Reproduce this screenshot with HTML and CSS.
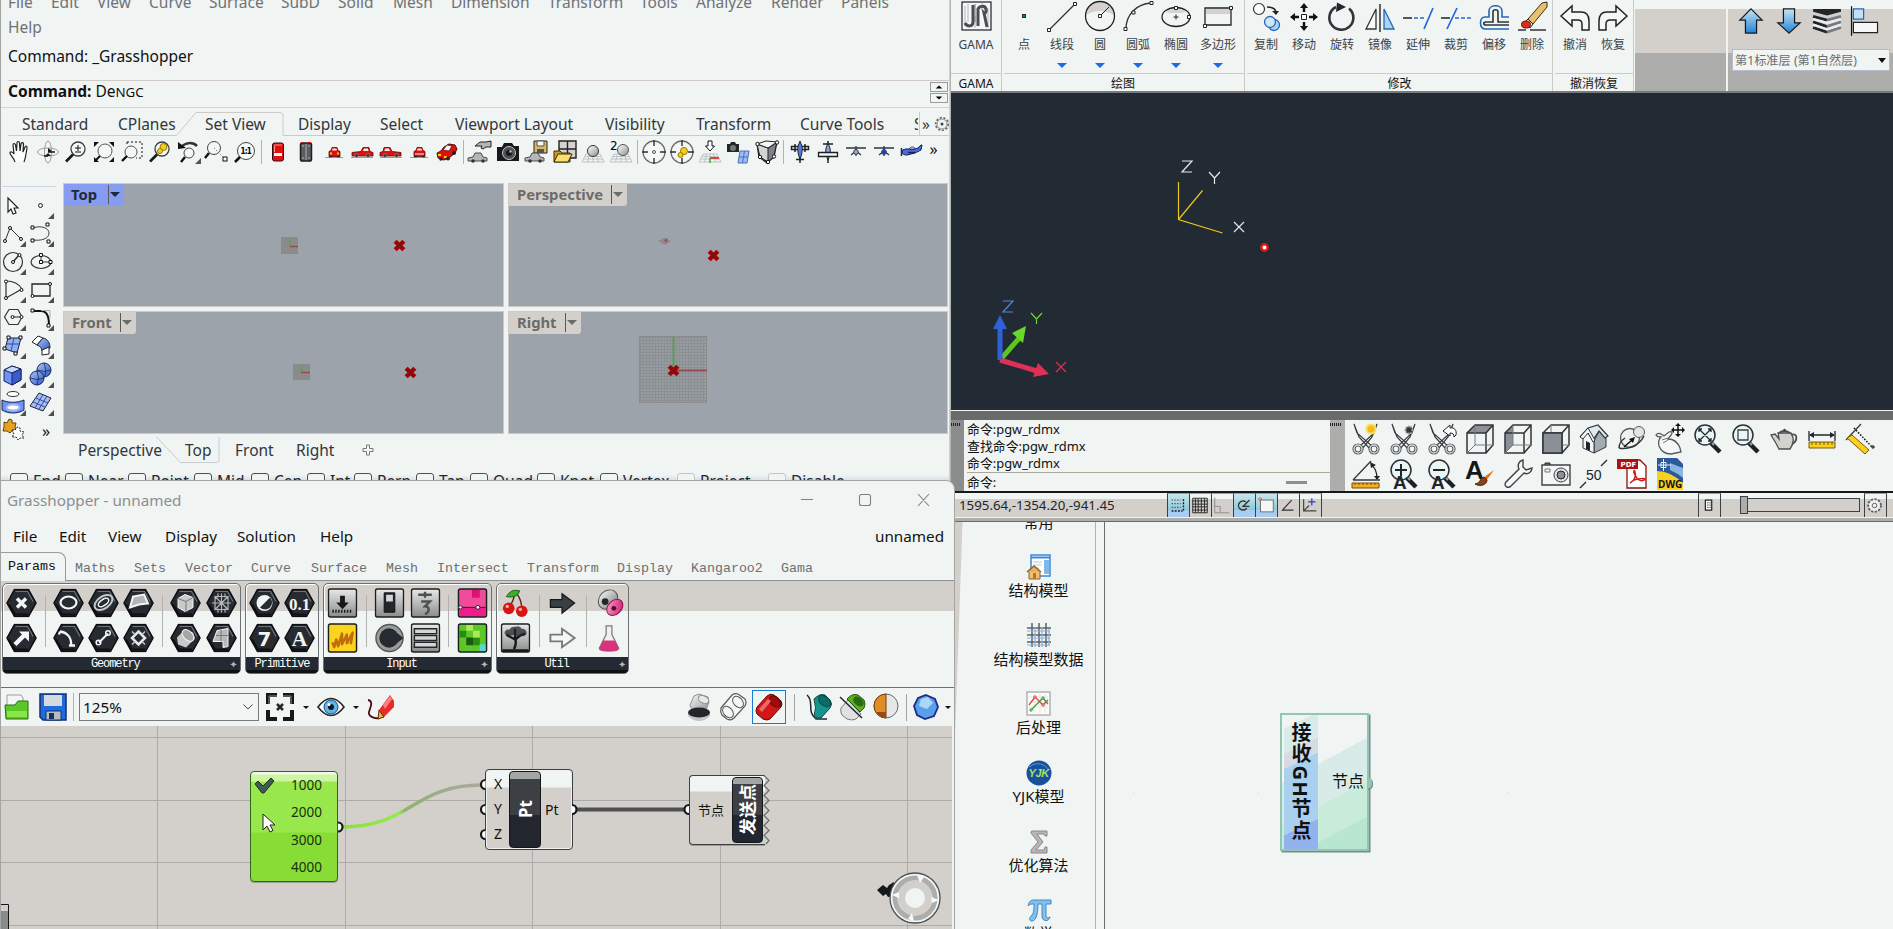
FILE: index.html
```html
<!DOCTYPE html>
<html lang="zh-CN">
<head>
<meta charset="utf-8">
<title>Grasshopper - unnamed</title>
<link rel="stylesheet" href="styles.css">
</head>
<body>
<svg class="defs" aria-hidden="true">
  <defs>
    <linearGradient id="gSphere" x1="0" y1="0" x2="1" y2="1"><stop offset="0" stop-color="#fff"/><stop offset="1" stop-color="#8d9194"/></linearGradient>
    <linearGradient id="gBlue" x1="0" y1="0" x2="1" y2="1"><stop offset="0" stop-color="#a9c8f5"/><stop offset="1" stop-color="#2f55c8"/></linearGradient>
    <linearGradient id="gArrow" x1="0" y1="0" x2="0" y2="1"><stop offset="0" stop-color="#c8e4f4"/><stop offset="1" stop-color="#1f84d6"/></linearGradient>
    <linearGradient id="gGrey" x1="0" y1="0" x2="0" y2="1"><stop offset="0" stop-color="#e8e8e6"/><stop offset="1" stop-color="#8a8c8c"/></linearGradient>
    <linearGradient id="gPink" x1="0" y1="0" x2="1" y2="1"><stop offset="0" stop-color="#f7a8c8"/><stop offset="1" stop-color="#d0106c"/></linearGradient>
  </defs>
  <symbol id="lens" viewBox="0 0 24 24"><circle cx="14" cy="9" r="7" fill="#f4f7f6" stroke="#3a3f44" stroke-width="1.300"/><path d="M9 14.500L2 21.500" stroke="#16191c" stroke-width="2.600"/></symbol>
  <symbol id="carSide" viewBox="0 0 24 24"><path d="M1 17.500h22" stroke="#9a9a98"/><path d="M2 12.500l9-1 2-4h6l1 4 3 1v3.500H2z" fill="#e01010" stroke="#5a0808" stroke-width=".8"/><path d="M13 11l1-2.500h4l.5 2.500z" fill="#e8eceb"/><circle cx="6.500" cy="15.500" r="1.800" fill="#333" stroke="#999" stroke-width=".6"/><circle cx="18" cy="15.500" r="1.800" fill="#333" stroke="#999" stroke-width=".6"/></symbol>
  <symbol id="carFront" viewBox="0 0 24 24"><path d="M3 17.500h18" stroke="#9a9a98"/><path d="M7 16.500v-5l2-1 1-3h5l1 3 2 1v5z" fill="#e01010" stroke="#5a0808" stroke-width=".8"/><path d="M10 10.500l.5-2h4l.5 2z" fill="#f4dede"/><path d="M7 16.500h3M15 16.500h3" stroke="#222" stroke-width="1.500"/></symbol>
  <symbol id="carGrey" viewBox="0 0 24 24"><path d="M2 18l5-1 2-4h6l2 4 4 1v3H2z" fill="#b5b7b6" stroke="#4a4c4c"/><circle cx="7" cy="21" r="1.800" fill="#333"/><circle cx="17" cy="21" r="1.800" fill="#333"/></symbol>
  <symbol id="floorGrid" viewBox="0 0 24 24"><path d="M5 14h14l4 8H1zM8.500 14l-2 8M12 14v8M15.500 14l2 8M4 16.500h16M2.500 19h19" fill="none" stroke="#b4b7b7" stroke-width=".8"/></symbol>
  <symbol id="scope" viewBox="0 0 24 24"><circle cx="12" cy="12" r="11" fill="#f4f7f6" stroke="#6b6f72" stroke-width="1.300"/><path d="M12 0v6M12 18v6M0 12h6M18 12h6" stroke="#2b2f33" stroke-width="1.400"/></symbol>
  <symbol id="plane" viewBox="0 0 24 24"><path d="M12 1v22" stroke="#1c2024" stroke-width="1.500"/><path d="M3.500 6.500h17v3h-17zM7 4v8M17 4v8M8 19.500h8" fill="#f0f4f3" stroke="#1c2024" stroke-width="1.500"/><path d="M12 2c3 4 3 10 0 17-3-7-3-13 0-17z" fill="#5a7be0" stroke="#1c2024"/></symbol>
  <symbol id="jet" viewBox="0 0 24 24"><path d="M2 8h20M12 6v10M7 15l5-4 5 4" fill="none" stroke="#30353a" stroke-width="1.300"/><circle cx="12" cy="12" r="2.300" fill="#a4b4e0" stroke="#30353a"/></symbol>
  <symbol id="corner" viewBox="0 0 28 28"><path d="M20 27h6v-6z" fill="#4c5052"/></symbol>
  <symbol id="hex" viewBox="0 0 31 29"><path d="M8.500 1h14L30 14.500 22.500 28h-14L1 14.500z" fill="#262b32" stroke="#0c0e10" stroke-width="1.500"/><path d="M9.500 3h12L27 13" fill="none" stroke="#6d7378" stroke-width="1.200"/><path d="M3 16l6 10h13" fill="none" stroke="#0e1012" stroke-width="2"/></symbol>
  <symbol id="tile" viewBox="0 0 31 31"><rect x="1" y="1" width="29" height="29" rx="2" fill="url(#gGrey)" stroke="#1c1e20" stroke-width="1.500"/></symbol>
  <symbol id="scissors" viewBox="0 0 30 32"><path d="M3 1l3 9 15 13-2 3L8 14zM26 1l-3 9L9 23l2 3L21 14z" fill="#f4f6f5" stroke="#33373b" stroke-width="1.200"/><circle cx="7" cy="26" r="4" fill="none" stroke="#585c60" stroke-width="3.200"/><circle cx="23" cy="26" r="4" fill="none" stroke="#585c60" stroke-width="3.200"/><circle cx="7" cy="26" r="4" fill="none" stroke="#d6d8d7" stroke-width="1.300"/><circle cx="23" cy="26" r="4" fill="none" stroke="#d6d8d7" stroke-width="1.300"/></symbol>
  <symbol id="bigLens" viewBox="0 0 30 32"><path d="M18 20l9 9" stroke="#1d2125" stroke-width="4.500"/><path d="M18 19l3 3" stroke="#9fa2a3" stroke-width="2"/><circle cx="12" cy="12" r="10" fill="#eaf5f6" stroke="#2c3136" stroke-width="1.500"/></symbol>
  <symbol id="cubeWire" viewBox="0 0 30 32"><path d="M2 10h19v20H2zM2 10l8-8h18v20l-7 8M21 10l7-8" fill="none" stroke="#30353a" stroke-width="1.500"/><path d="M10 2v20h18M10 22l-8 8" fill="none" stroke="#777c80"/></symbol>
  <symbol id="cross" viewBox="0 0 12 12"><path d="M2 2l8 8M10 2l-8 8" stroke="#970606" stroke-width="4"/></symbol>
</svg>

<main class="desktop">

<!-- Rhino -->
<section class="win rhino">
  <nav class="rmenu"><span>File</span><span>Edit</span><span>View</span><span>Curve</span><span>Surface</span><span>SubD</span><span>Solid</span><span>Mesh</span><span>Dimension</span><span>Transform</span><span>Tools</span><span>Analyze</span><span>Render</span><span>Panels</span><span>Help</span></nav>
  <div class="history">Command: _Grasshopper</div>
  <div class="prompt"><span><b>Command:</b> De<small>NGC</small></span>
    <span class="spin"><svg viewBox="0 0 18 10"><path d="M5 7h8L9 3z"/></svg><svg viewBox="0 0 18 10"><path d="M5 3h8L9 7z"/></svg></span>
  </div>
  <nav class="rtabs"><span>Standard</span><span>CPlanes</span><span class="on">Set View</span><span>Display</span><span>Select</span><span>Viewport Layout</span><span>Visibility</span><span>Transform</span><span>Curve Tools</span><span class="cut">S</span><span class="more">»<svg viewBox="0 0 16 16"><circle cx="8" cy="8" r="6.300" fill="none" stroke="#6c7072" stroke-width="1.800" stroke-dasharray="2.200 1.600"/><circle cx="8" cy="8" r="5" fill="none" stroke="#8b8f90"/><circle cx="8" cy="8" r="1.500" fill="#444"/></svg></span>
    <svg class="tabline" viewBox="0 0 942 25"><path d="M0 23.500H168.500L188 .5h84q3 0 3 3v20H942" fill="none" stroke="#cfcac6"/></svg></nav>
  <div class="rtools">
    <svg viewBox="0 0 24 24"><path d="M7 22c-1-4-5-7-5-9s3-1 4 1L5 5c0-2 2-2 2.500 0l1 6L9 3c0-2 2.500-2 2.500 0l.5 8 1-7c.5-2 2.500-1.500 2.500 0l-.5 8 2-5c.5-1.500 2.500-1 2 1-1 5-1 9-3 14" fill="#fbfcfc" stroke="#1e2226" stroke-width="1.200"/></svg>
    <svg viewBox="0 0 24 24"><ellipse cx="12" cy="12" rx="10.500" ry="4" fill="none" stroke="#9a9d9e"/><ellipse cx="12" cy="12" rx="3.500" ry="11" fill="none" stroke="#9a9d9e"/><path d="M9 16h6l-3-3zM12 8l4 3-4 2z" fill="#15181b"/><path d="M8 16h4M13 12h6" stroke="#15181b" stroke-width="1.500"/></svg>
    <svg viewBox="0 0 24 24"><use href="#lens"/><path d="M11 8h6M14 5v6M11 12h6" stroke="#111"/></svg>
    <svg viewBox="0 0 24 24"><path d="M2 2h5L2 7zM22 2h-5l5 5zM2 22v-5l5 5zM22 22v-5l-5 5z" fill="#111"/><circle cx="13" cy="11" r="7" fill="#f4f7f6" stroke="#555"/><path d="M8 16l-5 5" stroke="#111" stroke-width="2"/></svg>
    <svg viewBox="0 0 24 24"><path d="M7 2h15v16h-6M7 2v4" fill="none" stroke="#111" stroke-dasharray="2 2"/><circle cx="11" cy="12" r="6" fill="#f4f7f6" stroke="#555"/><path d="M7 16l-5 5" stroke="#111" stroke-width="2.400"/></svg>
    <svg viewBox="0 0 24 24"><use href="#lens"/><circle cx="15.500" cy="7" r="3.500" fill="#f6ce1a" stroke="#9a7a08"/><circle cx="12" cy="11" r="2.500" fill="#f6ce1a" stroke="#9a7a08"/></svg>
    <svg viewBox="0 0 24 24"><path d="M4 7c5-5 12-5 16-1" fill="none" stroke="#333" stroke-width="2.500"/><path d="M1 9V2l8 6z" fill="#111"/><circle cx="12" cy="13" r="5" fill="#f4f7f6" stroke="#444"/><path d="M8 17l-4 5" stroke="#111" stroke-width="2.400"/><path d="M18 24h6v-6z" fill="#555"/></svg>
    <svg viewBox="0 0 24 24"><circle cx="9" cy="8" r="6.500" fill="#f4f7f6" stroke="#444"/><path d="M4 13l-4 5" stroke="#111" stroke-width="2.400"/><path d="M9 8l9 9" stroke="#555" stroke-dasharray="1 2"/><rect x="18" y="17" width="4" height="4" fill="#fff" stroke="#111"/></svg>
    <svg viewBox="0 0 24 24"><circle cx="13" cy="11" r="8.500" fill="#f8fafa" stroke="#444"/><path d="M7 17l-5 5" stroke="#111" stroke-width="2.600"/><text x="7.500" y="14" class="t8">1:1</text></svg>
    <i></i>
    <svg viewBox="0 0 24 24"><rect x="6.500" y="3" width="11" height="18" rx="2" fill="#e01010" stroke="#3a0808"/><path d="M8 13h8v3H8z" fill="#f4f7f6"/><path d="M8 5h8M8.500 6v6" stroke="#ff9080"/></svg>
    <svg viewBox="0 0 24 24"><rect x="6.500" y="3" width="11" height="18" rx="1.500" fill="#5a5e61" stroke="#1c1e20" stroke-width="1.500"/><path d="M12 4v16M8 6h2M14 6h2M8 18h2M14 18h2" stroke="#a9acac"/><path d="M7 2.500h3M14 2.500h3M7 21.500h3M14 21.500h3" stroke="#e01010"/></svg>
    <svg viewBox="0 0 24 24"><use href="#carFront"/><path d="M8 13.500h2M15 13.500h2" stroke="#f6ce1a" stroke-width="2"/></svg>
    <svg viewBox="0 0 24 24"><use href="#carSide"/></svg>
    <svg viewBox="0 0 24 24"><use href="#carSide" transform="matrix(-1 0 0 1 24 0)"/></svg>
    <svg viewBox="0 0 24 24"><use href="#carFront"/><path d="M8 14h9" stroke="#f4f7f6"/></svg>
    <svg viewBox="0 0 24 24"><path d="M2 13l4-2 3-4 5-3 6 1 2 4-2 4-6 5-5 2-6-2z" fill="#e01010" stroke="#5a0808"/><path d="M8 10l4-5 5 1-3 5z" fill="#f4f7f6" stroke="#5a0808" stroke-width=".7"/><path d="M3 15h3M9 17h3" stroke="#f6ce1a" stroke-width="2"/><circle cx="19" cy="13" r="2" fill="#222"/><circle cx="6" cy="19" r="1.800" fill="#222"/><circle cx="13" cy="18.500" r="2" fill="#222"/></svg>
    <i></i>
    <svg viewBox="0 0 24 24"><use href="#carGrey" x="-2" y="0"/><path d="M7 6l5-4h6l5-1v6l-5 0-3 2-2-1 1-2-6 0z" fill="#b5b7b6" stroke="#222"/></svg>
    <svg viewBox="0 0 24 24"><path d="M1 7h5l2-4h8l2 3h5v15H1z" fill="#17191b"/><circle cx="13" cy="13" r="6.500" fill="#4d5154" stroke="#c4c8c8"/><circle cx="13" cy="13" r="3" fill="#15181b"/><circle cx="14.500" cy="11.500" r="1.300" fill="#9fc0bd"/></svg>
    <svg viewBox="0 0 24 24"><path d="M10 1h13v12H10z" fill="#d8bc62" stroke="#222"/><path d="M13 1h7v5h-7z" fill="#f4f7f6" stroke="#555"/><path d="M13 9h7v4h-7z" fill="#555"/><use href="#carGrey" x="-1" y="0"/></svg>
    <svg viewBox="0 0 24 24"><path d="M6 1h17v17H6zM14.500 1v17M6 9h17" fill="#d4d2ce" stroke="#222" stroke-width="1.400"/><path d="M1 11h6l2 2h8v9H1z" fill="#c89a1c" stroke="#3a2c08"/><path d="M5 14h14l-4 8H1z" fill="#fadf6e" stroke="#3a2c08"/></svg>
    <svg viewBox="0 0 24 24"><use href="#floorGrid"/><circle cx="12" cy="11" r="5.500" fill="url(#gSphere)" stroke="#333"/></svg>
    <svg viewBox="0 0 24 24"><use href="#floorGrid"/><circle cx="14" cy="10" r="5.500" fill="url(#gSphere)" stroke="#555"/><text x="1" y="10" class="t12">2</text></svg>
    <i></i>
    <svg viewBox="0 0 24 24"><use href="#scope"/><circle cx="12" cy="12" r="1.500" fill="none" stroke="#555"/></svg>
    <svg viewBox="0 0 24 24"><use href="#scope"/><circle cx="14" cy="11" r="3.500" fill="#f6ce1a" stroke="#9a7a08"/><circle cx="10.500" cy="15" r="2.500" fill="#f6ce1a" stroke="#9a7a08"/></svg>
    <svg viewBox="0 0 24 24"><use href="#floorGrid"/><path d="M10 1h4v5h2.500L12 11 7.500 6H10z" fill="#fff" stroke="#111"/><path d="M12 18h9" stroke="#e01010" stroke-width="1.500"/><path d="M12 18v5" stroke="#2eb82e" stroke-width="1.500"/></svg>
    <svg viewBox="0 0 24 24"><path d="M1 4h3l1-2h4l1 2h3v8H1z" fill="#22262a"/><circle cx="7" cy="8" r="3" fill="#707a7a"/><path d="M14 11h9l-2 12h-9z" fill="#9cbcf4" stroke="#4f6fb8"/><path d="M13 17h9M18.500 11l-2 12" stroke="#4f6fb8"/></svg>
    <svg viewBox="0 0 24 24"><path d="M2 4l11 4 9-6-3 15-7 6-8-6z" fill="#7c8286" stroke="#222" stroke-width="1.300"/><path d="M2 4l11 4v14l-8-5z" fill="#d2d4d3" stroke="#222"/><path d="M2 4l9-3 11 1-9 6z" fill="#f4f7f6" stroke="#222"/><g fill="#fff" stroke="#111"><circle cx="2.500" cy="4" r="1.700"/><circle cx="22" cy="2.500" r="1.700"/><circle cx="5" cy="17" r="1.700"/><circle cx="19" cy="16.500" r="1.700"/><circle cx="13" cy="22" r="1.700"/></g></svg>
    <i></i>
    <svg viewBox="0 0 24 24"><use href="#plane"/></svg>
    <svg viewBox="0 0 24 24"><path d="M12 1v22M7 4h10" stroke="#1c2024" stroke-width="1.500"/><path d="M12 4c3 4 3 9 0 16-3-7-3-12 0-16z" fill="#8fa4e0" stroke="#1c2024"/><path d="M2.500 12.500h19v4h-19z" fill="#f0f4f3" stroke="#1c2024" stroke-width="1.300"/></svg>
    <svg viewBox="0 0 24 24"><use href="#jet"/></svg>
    <svg viewBox="0 0 24 24"><use href="#jet"/><circle cx="12" cy="12" r="2.500" fill="#2442b8"/></svg>
    <svg viewBox="0 0 24 24"><path d="M2 12q0-3 4-3h9l3-1 3-3 1 0-1 5-6 3-8 2q-5 0-5-3z" fill="#4a6ae0" stroke="#15205c"/><path d="M9 9l2-2h3l1 2z" fill="#cfe0f8" stroke="#15205c" stroke-width=".7"/><path d="M1.500 8v8M8 12.500h7" stroke="#15205c" stroke-width="1.500"/></svg>
    <em>»</em>
  </div>
  <div class="rmain">
    <div class="rside">
      <svg viewBox="0 0 28 28"><path d="M8 6v14l3-3 2 5 3-1-2-5h4z" fill="#fff" stroke="#22262a" stroke-width="1.200"/></svg>
      <svg viewBox="0 0 28 28"><circle cx="12.500" cy="13.500" r="2" fill="none" stroke="#222"/><use href="#corner"/></svg>
      <svg viewBox="0 0 28 28"><path d="M5 21l5-13 11 11" fill="none" stroke="#333"/><g fill="#fff" stroke="#111"><circle cx="5" cy="21" r="1.500"/><circle cx="10" cy="8" r="1.500"/><circle cx="21" cy="19" r="1.500"/></g><use href="#corner"/></svg>
      <svg viewBox="0 0 28 28"><path d="M5 8c8-3 16 0 16 5 0 6-8 8-16 7" fill="none" stroke="#444"/><path d="M3 6h3v3H3zM18 3h3v3h-3zM3 19h3v3H3zM19 20h3v3h-3z" fill="#fff" stroke="#111"/><use href="#corner"/></svg>
      <svg viewBox="0 0 28 28"><circle cx="13" cy="14" r="9.500" fill="none" stroke="#333" stroke-width="1.200"/><path d="M13 14l6-7" stroke="#222" stroke-width="1.300"/><g fill="#fff" stroke="#111"><circle cx="13" cy="14" r="1.500"/><circle cx="19.500" cy="7" r="1.500"/></g><use href="#corner"/></svg>
      <svg viewBox="0 0 28 28"><ellipse cx="13" cy="14" rx="10" ry="6.500" fill="none" stroke="#333" stroke-width="1.200"/><path d="M13 7v7h9" fill="none" stroke="#333"/><path d="M11.500 5.500h3v3h-3zM11.500 12.500h3v3h-3zM21 12.500h3v3h-3z" fill="#fff" stroke="#111"/><use href="#corner"/></svg>
      <svg viewBox="0 0 28 28"><path d="M6 5v17l16-9C19 8 13 5 6 5z" fill="none" stroke="#333" stroke-width="1.200"/><g fill="#fff" stroke="#111"><circle cx="6" cy="5.500" r="1.500"/><circle cx="6" cy="22" r="1.500"/><circle cx="21.500" cy="14" r="1.500"/></g><use href="#corner"/></svg>
      <svg viewBox="0 0 28 28"><path d="M4 8h18v12H4z" fill="none" stroke="#222" stroke-width="1.300"/><g fill="#fff" stroke="#111"><circle cx="22" cy="8" r="1.500"/><circle cx="4.500" cy="20" r="1.500"/></g><use href="#corner"/></svg>
      <svg viewBox="0 0 28 28"><path d="M9 5.500h9l4 7.500-4 7.500H9L4.500 13z" fill="none" stroke="#333" stroke-width="1.200"/><path d="M12 13h9" stroke="#222"/><g fill="#fff" stroke="#111"><circle cx="12.500" cy="13" r="1.500"/><circle cx="21.500" cy="13" r="1.500"/></g><use href="#corner"/></svg>
      <svg viewBox="0 0 28 28"><path d="M5 7h8c6 0 8 6 8 14" fill="none" stroke="#111" stroke-width="2"/><path d="M13 6.500h9V14" fill="none" stroke="#aaa"/><path d="M3 5h3v3H3zM19 20h3v3h-3z" fill="#fff" stroke="#111"/><use href="#corner"/></svg>
      <svg viewBox="0 0 28 28"><path d="M8 6h13l-4 15-12-4z" fill="#8fb0f4" stroke="#223"/><path d="M14 6l-3 13M7 12h12" stroke="#334e9c"/><path d="M7 4h3v3H7zM19 4h3v3h-3zM3 15h3v3H3zM14 20h3v3h-3z" fill="#fff" stroke="#111"/><use href="#corner"/></svg>
      <svg viewBox="0 0 28 28"><path d="M4 10l6-6 5 2-6 7z" fill="#fff" stroke="#222"/><path d="M9 13l6-7c5 1 7 5 7 10l-8 3c0-3-2-5-5-6z" fill="url(#gBlue)" stroke="#222"/><path d="M14 18l7-3v7l-7 1z" fill="#fff" stroke="#222"/><use href="#corner"/></svg>
      <svg viewBox="0 0 28 28"><path d="M4 9l8-4 9 3v11l-9 5-8-4z" fill="#6f90f4" stroke="#182858"/><path d="M4 9l8-4 9 3-9 4z" fill="#c4d9fa" stroke="#182858"/><path d="M12 12l9-4v11l-9 5z" fill="#3a5cd0" stroke="#182858"/><use href="#corner"/></svg>
      <svg viewBox="0 0 28 28"><circle cx="16" cy="9" r="7" fill="url(#gBlue)" stroke="#182858"/><circle cx="9" cy="17" r="7" fill="url(#gBlue)" stroke="#182858"/><path d="M9 10q3 7 0 14M2 17q7 3 14 0M9.500 9q7 3 13 0M16 2q3 6 1 13" fill="none" stroke="#182858" stroke-width=".8"/><use href="#corner"/></svg>
      <svg viewBox="0 0 28 28"><ellipse cx="13" cy="5" rx="6" ry="2.500" fill="#fff" stroke="#333"/><path d="M2 11c6 3 15 3 22 0v10c-6 4-16 4-22 0z" fill="#6f90f4" stroke="#182858"/><ellipse cx="13" cy="18.500" rx="6.500" ry="3" fill="#fff" stroke="#9cbcf4" stroke-width="2"/><use href="#corner"/></svg>
      <svg viewBox="0 0 28 28"><path d="M11 4l12 5-8 13-13-5z" fill="#a9bdf4" stroke="#223"/><path d="M8 9l12 5M5 13l12 5M15 5.500L7 19M19 7l-8 13" stroke="#334e9c"/><use href="#corner"/></svg>
      <svg viewBox="0 0 28 28"><path d="M4 5l3 1 2-4 3 1 0 3 4 0-1 4 1 3-4 1-2 2-3-2-4 0 1-4z" fill="#e8a020" stroke="#6a4408"/><path d="M12 13l3 0 2-3 3 1 0 3 4 1-2 3 2 3-4 0-2 2-2-3-4 0 2-3z" fill="#fff" stroke="#222" stroke-dasharray="2 1"/></svg>
      <em>»</em>
    </div>
    <div class="views">
      <div class="view"><div class="vtag act">Top<s></s></div><svg class="vart" viewBox="0 0 440 123"><rect x="217" y="53" width="17" height="17" fill="#8a8c8c"/><path d="M226 54v9" stroke="#5aa055" stroke-width="1.500"/><path d="M226 62.500h8" stroke="#a04848" stroke-width="1.500"/><use href="#cross" x="329" y="55" width="13" height="13"/></svg></div>
      <div class="view"><div class="vtag">Perspective<s></s></div><svg class="vart" viewBox="0 0 440 123"><path d="M149 57l6-3 7 3-6 4z" fill="#8a8c8c"/><path d="M155 56l3-1v4z" fill="#a04848"/><path d="M156 55h3" stroke="#3c9038"/><use href="#cross" x="198" y="65" width="13" height="13"/></svg></div>
      <div class="view"><div class="vtag">Front<s></s></div><svg class="vart" viewBox="0 0 440 122"><rect x="229" y="52" width="17" height="16" fill="#8a8c8c"/><path d="M237.500 53v8" stroke="#5aa055" stroke-width="1.500"/><path d="M237 60.500h9" stroke="#a04848" stroke-width="1.500"/><use href="#cross" x="340" y="54" width="13" height="13"/></svg></div>
      <div class="view"><div class="vtag">Right<s></s></div><i class="mesh"></i><svg class="vart" viewBox="0 0 440 122"><path d="M164.500 25v34" stroke="#5a9a55" stroke-width="2"/><path d="M165 58.500h33" stroke="#984c4c" stroke-width="2"/><use href="#cross" x="158" y="52" width="13" height="13"/></svg></div>
    </div>
  </div>
  <nav class="vtabs"><span>Perspective</span><span>Top</span><span>Front</span><span>Right</span><svg viewBox="0 0 12 12"><path d="M4.500 1h3v3.500H11v3H7.500V11h-3V7.500H1v-3h3.500z" fill="none" stroke="#777b7d"/></svg><svg class="vline" viewBox="0 0 64 27"><path d="M.5 0L24.500 25.500H60q3 0 3-3V0" fill="none" stroke="#c9cbd2"/></svg></nav>
  <div class="osnap"><span>End</span><span>Near</span><span>Point</span><span>Mid</span><span>Cen</span><span>Int</span><span>Perp</span><span>Tan</span><span>Quad</span><span>Knot</span><span>Vertex</span><span class="dim">Project</span><span class="dim">Disable</span></div>
</section>

<!-- YJK CAD -->
<section class="win cad">
  <div class="ribbon">
    <div class="rp p1"><div class="cells"><div class="cell"><svg viewBox="0 0 32 32"><rect x="2" y="2" width="29" height="28" fill="#f4f6f5" stroke="#1c2024" stroke-width="1.200"/><path d="M5 6v20M8 4v18M25 5v14M28 8v20M22 3v6M15 16v12" stroke="#b4b6b6"/><path d="M13 5v17c0 5-6 5-8 1" fill="none" stroke="#4a4e52" stroke-width="3"/><path d="M18 26V9c1-3 7-4 8 0 1 3-1 5-2 4l3 14" fill="none" stroke="#4a4e52" stroke-width="3"/><path d="M15 4v18" stroke="#777b7d"/></svg>GAMA</div></div><b>GAMA</b></div>
    <div class="rp p2"><div class="cells">
      <div class="cell"><svg viewBox="0 0 32 32"><rect x="14.500" y="14.500" width="3" height="3" fill="#1c8a78" stroke="#222"/></svg>点</div>
      <div class="cell d"><svg viewBox="0 0 32 32"><path d="M3 30L29 4" stroke="#30353a" stroke-width="1.300"/><path d="M1.500 28.500h3v3h-3zM27.500 2.500h3v3h-3z" fill="#fff" stroke="#222"/></svg>线段</div>
      <div class="cell d"><svg viewBox="0 0 32 32"><path d="M2 15a14 14 0 0 1 28 0q-14-8-28 0z" fill="#d4d2ce"/><circle cx="16" cy="16" r="14.500" fill="none" stroke="#222" stroke-width="1.300"/><path d="M16 16l9-9" stroke="#222"/><path d="M14.500 14.500h3v3h-3z" fill="#fff" stroke="#222"/></svg>圆</div>
      <div class="cell d"><svg viewBox="0 0 32 32"><path d="M4 29C4 14 15 4 29 3" fill="none" stroke="#30353a" stroke-width="1.300"/><path d="M2 27.500h3v3H2zM10 11h3v3h-3zM28 1.500h3v3h-3z" fill="#fff" stroke="#222"/></svg>圆弧</div>
      <div class="cell d"><svg viewBox="0 0 32 32"><ellipse cx="16" cy="17" rx="14" ry="9.500" fill="#f0f4f3" stroke="#222" stroke-width="1.300"/><path d="M5 12q11-6 22 0-11 2-22 0z" fill="#d4d2ce"/><path d="M13.500 17h5M16 14.500v5" stroke="#222"/><path d="M14.500 6.500h3v3h-3zM27.500 15.500h3v3h-3z" fill="#fff" stroke="#222"/></svg>椭圆</div>
      <div class="cell d w"><svg viewBox="0 0 32 32"><path d="M3 8h26v17H3z" fill="#f0f4f3" stroke="#222" stroke-width="1.300"/><path d="M4 9h24v5H4z" fill="#d4d2ce"/><path d="M1.500 24.500h3v3h-3zM27.500 6.500h3v3h-3z" fill="#fff" stroke="#222"/></svg>多边形</div></div><b>绘图</b></div>
    <div class="rp p3"><div class="cells">
      <div class="cell"><svg viewBox="0 0 32 32"><circle cx="9" cy="9" r="5.500" fill="#fff" stroke="#30353a" stroke-width="1.200"/><path d="M17 7c6 0 9 2 9 6" fill="none" stroke="#222" stroke-width="1.500"/><path d="M22 11h7l-3 4z" fill="#222"/><circle cx="24" cy="25" r="5.500" fill="#a9d4f4" stroke="#2468b8" stroke-width="1.300"/><circle cx="20" cy="22" r="5.500" fill="#cfe6f7" stroke="#2468b8" stroke-width="1.300"/></svg>复制</div>
      <div class="cell"><svg viewBox="0 0 32 32"><path d="M13.500 14.500h5v5h-5z" fill="#fff" stroke="#222"/><path d="M16 3l4 5h-8zM16 31l4-5h-8zM2 17l5-4v8zM30 17l-5-4v8z" fill="#111"/><path d="M16 7v5M16 22v5M6 17h5M21 17h5" stroke="#111" stroke-width="2.500"/></svg>移动</div>
      <div class="cell"><svg viewBox="0 0 32 32"><path d="M23 8.500a12 12 0 1 1-13-1.500" fill="none" stroke="#30353a" stroke-width="2.600"/><path d="M11 2.500l9 4.500-10 5z" fill="#22262a"/></svg>旋转</div>
      <div class="cell"><svg viewBox="0 0 32 32"><path d="M12 9v20H2z" fill="#f7f9f9" stroke="#333" stroke-width="1.300"/><path d="M20 9v20h10z" fill="#a9d4f4" stroke="#2468b8" stroke-width="1.300"/><path d="M16 4v28" stroke="#111" stroke-width="1.300"/></svg>镜像</div>
      <div class="cell"><svg viewBox="0 0 32 32"><path d="M1 18h9" stroke="#222" stroke-width="1.500"/><path d="M12 18h12" stroke="#2468d8" stroke-width="1.500" stroke-dasharray="4 2"/><path d="M31 8l-9 21" stroke="#2468d8" stroke-width="1.700"/></svg>延伸</div>
      <div class="cell"><svg viewBox="0 0 32 32"><path d="M1 18h9" stroke="#222" stroke-width="1.500"/><path d="M15 18h16" stroke="#2468d8" stroke-width="1.500" stroke-dasharray="4 2"/><path d="M17 8L7 29" stroke="#2468d8" stroke-width="1.700"/></svg>裁剪</div>
      <div class="cell"><svg viewBox="0 0 32 32"><path d="M31 17h-7V11c0-7-13-7-13 0v6H7c-6 0-6 11 0 12h24" fill="none" stroke="#2468b8" stroke-width="1.600"/><path d="M31 22H20V12c0-3-5-3-5 0v10H8c-3 0-3 3 0 3h23" fill="none" stroke="#30353a" stroke-width="1.600"/></svg>偏移</div>
      <div class="cell"><svg viewBox="0 0 32 32"><path d="M2 30h8M14 30h16" stroke="#30353a" stroke-width="1.500"/><path d="M12 19L26 3l5-1v5L17 24z" fill="#e8c070" stroke="#3a2c18"/><path d="M12 19l5 5-3 4-6-5z" fill="#f0f0f0" stroke="#222"/><ellipse cx="10" cy="24.500" rx="4.500" ry="3.500" fill="#d83018" stroke="#701408"/></svg>删除</div></div><b>修改</b></div>
    <div class="rp p4"><div class="cells">
      <div class="cell"><svg viewBox="0 0 32 32"><path d="M2 16L13 6v6h9q8 0 8 9v9h-7v-6q0-4-4-4h-6v6z" fill="#f4f7f6" stroke="#222" stroke-width="1.500"/></svg>撤消</div>
      <div class="cell"><svg viewBox="0 0 32 32"><path d="M30 16L19 6v6h-9q-8 0-8 9v9h7v-6q0-4 4-4h6v6z" fill="#f4f7f6" stroke="#222" stroke-width="1.500"/></svg>恢复</div></div><b>撤消恢复</b></div>
    <div class="void"></div>
    <div class="floors">
      <div class="ficons">
        <svg viewBox="0 0 32 28"><path d="M16 1l12 12h-6v14H10V13H4z" fill="url(#gArrow)" stroke="#15181b" stroke-width="1.300"/></svg>
        <svg viewBox="0 0 32 28"><path d="M16 27L4 16h6V1h12v15h6z" fill="url(#gArrow)" stroke="#15181b" stroke-width="1.300"/></svg>
        <svg viewBox="0 0 32 28"><path d="M1 1h30v3l-15 4L1 4z" fill="#22262a"/><path d="M1 9l15 4M1 15l15 5M1 21l15 5" stroke="#22262a" stroke-width="3"/><path d="M31 9l-15 4M31 15l-15 5M31 21l-15 5" stroke="#777c80" stroke-width="3"/><path d="M1 12l15 4 15-4M1 18l15 5 15-5" fill="none" stroke="#eceeee" stroke-width="2.500"/></svg>
        <svg viewBox="0 0 32 28"><path d="M1.500 -2v32" stroke="#111" stroke-width="1.300"/><path d="M3.500 1h11v11h-11z" fill="#bfe0f5" stroke="#2468b8" stroke-width="1.300"/><path d="M3.500 15.500h26v11h-26z" fill="#f4f7f6" stroke="#222" stroke-width="1.300"/></svg>
      </div>
      <div class="fsel">第1标准层 (第1自然层)<svg viewBox="0 0 8 5"><path d="M0 0h8L4 5z"/></svg></div>
    </div>
  </div>
  <div class="stage">
    <svg viewBox="0 0 943 317">
      <path d="M228.500 89v37.500l44 13.500M228.500 126.500l24-29" fill="none" stroke="#e8c81c" stroke-width="1.200"/>
      <g fill="none" stroke="#e4e8e8" stroke-width="1.200"><path d="M232 68h10l-10 11h10M259 79l5.500 6 5.500-6M264.500 85v6M284 129l10 10M294 129l-10 10"/></g>
      <circle cx="314.500" cy="154.500" r="3.200" fill="#fff" stroke="#e01818" stroke-width="2.400"/>
      <path d="M50 267l21-24" stroke="#5ac81e" stroke-width="5"/><path d="M76 233l-3 17-11-10z" fill="#6ad82a"/>
      <path d="M50 267l37 11" stroke="#e03058" stroke-width="5"/><path d="M99 281l-16 3 5-14z" fill="#e03058"/>
      <path d="M50 267v-34" stroke="#2f62d8" stroke-width="5"/><path d="M50 222l7 14H43z" fill="#2f62d8"/>
      <g fill="none" stroke-width="1.200"><path d="M53 208h10l-10 11h10" stroke="#4f86e0"/><path d="M81 220l5.500 6 5.500-6M86.500 226v5" stroke="#6ad82a"/><path d="M106 269l10 10M116 269l-10 10" stroke="#e03058"/></g>
    </svg>
  </div>
  <div class="dockbar"></div>
  <div class="dock">
    <div class="grip g1"></div>
    <div class="cmd"><p>命令:pgw_rdmx</p><p>查找命令:pgw_rdmx</p><p>命令:pgw_rdmx</p><div>命令:<i></i></div></div>
    <div class="grip g2"></div>
    <div class="tools">
      <svg viewBox="0 0 30 32"><use href="#scissors"/><circle cx="20" cy="6" r="4.500" fill="#f6b81a" stroke="#f8e060" stroke-width="2"/></svg>
      <svg viewBox="0 0 30 32"><use href="#scissors"/><circle cx="20" cy="7" r="3.500" fill="#30353a" stroke="#9a9d9e" stroke-width="2" stroke-dasharray="1.500 1"/></svg>
      <svg viewBox="0 0 30 32"><use href="#scissors"/><path d="M29 12c1-5-2-8-6-7V2l-7 6 7 5v-3c3 0 4 1 4 4z" fill="#fff" stroke="#222"/></svg>
      <svg viewBox="0 0 30 32"><path d="M2 10l8-8h18l-7 8z" fill="#8a9096"/><use href="#cubeWire"/></svg>
      <svg viewBox="0 0 30 32"><path d="M2 10l8-8v20l-8 8z" fill="#8a9096"/><use href="#cubeWire"/></svg>
      <svg viewBox="0 0 30 32"><use href="#cubeWire"/><path d="M2 10h19v20H2z" fill="#8a9096" stroke="#30353a" stroke-width="1.500"/></svg>
      <svg viewBox="0 0 30 32"><path d="M15 30l12-6V13l-5-8-7 13z" fill="#a4abb0" stroke="#33373b"/><path d="M4 14v11l11 5V18L9 9z" fill="#f4f7f6" stroke="#33373b"/><path d="M1 14L9 5l10-3 10 11-3 2-6-7-6 9-6-8z" fill="#dfe9ee" stroke="#33373b" stroke-width="1.200"/><path d="M9 5l7 12-2 2L9 10l-5 6-3-2z" fill="#eef4f6" stroke="#33373b"/><path d="M7 18l4 2v8l-4-2z" fill="#22262a"/></svg>
      <svg viewBox="0 0 30 32"><circle cx="13" cy="15" r="9.500" fill="#eef2f1" stroke="#555a5e" stroke-width="1.300"/><circle cx="22" cy="9" r="5.500" fill="#e2e5e4" stroke="#555a5e"/><path d="M2 25c8 2 20-2 25-12M2 25c0-4 3-8 6-10" fill="none" stroke="#33373b" stroke-width="1.500"/><path d="M7 24l8-7" stroke="#111" stroke-width="1.500"/><path d="M18 14l-2 6-4-4z" fill="#111"/></svg>
      <svg viewBox="0 0 30 32"><path d="M1 12c2-3 6-1 8 1l5-4c3-1 4 1 2 3l-3 4c6 0 10 4 12 9l1 4-10 2c-6 0-10-3-12-8-1-4 0-7 2-9-2 0-4 0-5-2z" fill="#f4f7f6" stroke="#555a5e" stroke-width="1.300"/><path d="M7 17l6-2M8 20l5-3" stroke="#777"/><path d="M23 1v12M17 7h12" stroke="#111" stroke-width="1.500"/><path d="M23 0l3 3h-6zM23 14l3-3h-6zM16 7l3-3v6zM30 7l-3-3v6z" fill="#111"/></svg>
      <svg viewBox="0 0 30 32"><use href="#bigLens"/><path d="M6 6l12 12M18 6L6 18M6 9V6h3M15 6h3v3M6 15v3h3M15 18h3v-3" fill="none" stroke="#22262a" stroke-width="1.300"/></svg>
      <svg viewBox="0 0 30 32"><use href="#bigLens"/><path d="M7 7h10v10H7z" fill="none" stroke="#3c4248" stroke-width="1.300"/></svg>
      <svg viewBox="0 0 30 32"><path d="M9 10h13q5 8-1 16H10Q7 20 2 12l4-1 4 5z" fill="#d4d2ce" stroke="#4a4e52" stroke-width="1.300"/><path d="M10 10q5-4 11 0M22 12c7-3 7 6 1 9" fill="none" stroke="#4a4e52" stroke-width="1.800"/><circle cx="15.500" cy="7" r="1.300" fill="#444"/></svg>
      <svg viewBox="0 0 30 32"><path d="M2 8v10M28 8v10M3 12h24" stroke="#22262a" stroke-width="1.300"/><path d="M2 12l5-3v6zM28 12l-5-3v6z" fill="#22262a"/><path d="M2 19h26v6H2z" fill="#f8d020" stroke="#7a5a08"/><path d="M5 19v3M9 19v3M13 19v3M17 19v3M21 19v3M25 19v3" stroke="#7a5a08"/></svg>
      <svg viewBox="0 0 30 32"><path d="M1 17L16 1" stroke="#33373b" stroke-width="1.300"/><path d="M9 5l18 19" stroke="#111" stroke-width="1.500" stroke-dasharray="1.500 1.500"/><path d="M7 12l17 15-4 4L2 15z" fill="#f8d020" stroke="#7a5a08"/><path d="M26 24h4M28 22v4" stroke="#111"/></svg>
      <svg viewBox="0 0 30 32"><path d="M2 22L20 3M2 22h27" stroke="#33373b" stroke-width="1.300"/><path d="M20 7c5 3 6 8 6 14" fill="none" stroke="#222" stroke-width="1.300"/><path d="M19 4l6 3-5 3zM26 22l-3-4h6z" fill="#222"/><path d="M1 25h27v5H1z" fill="#f0b020" stroke="#7a4a08"/><path d="M4 25v2M8 25v2M12 25v2M16 25v2M20 25v2M24 25v2" stroke="#7a4a08"/></svg>
      <svg viewBox="0 0 30 32"><use href="#bigLens"/><path d="M6 12h12M12 6v12" stroke="#22262a" stroke-width="2"/><text x="4" y="31" class="tA">A</text></svg>
      <svg viewBox="0 0 30 32"><use href="#bigLens"/><path d="M6 12h12" stroke="#22262a" stroke-width="2"/><text x="4" y="31" class="tA">A</text></svg>
      <svg viewBox="0 0 30 32"><text x="0" y="21" class="tB">A</text><path d="M29 12L18 20l3 3z" fill="#d8701c"/><path d="M19 19c-5 2-3 6-9 7 5 3 12 1 12-4z" fill="#8a4418" stroke="#4a2008"/></svg>
      <svg viewBox="0 0 30 32"><path d="M20 2c-4 1-6 5-4 9L3 24c-3 4 2 7 5 4l13-13c4 2 8-1 8-5l-6 2-3-3z" fill="#f4f7f6" stroke="#3c4248" stroke-width="1.400"/></svg>
      <svg viewBox="0 0 30 32"><path d="M1 7h28v20H1z" fill="#f4f7f6" stroke="#3c4248" stroke-width="1.400"/><path d="M4 7V5h5v2" fill="#555" stroke="#333"/><path d="M4 11h5v3H4z" fill="none" stroke="#777"/><circle cx="20" cy="17" r="7" fill="#e2e5e4" stroke="#3c4248"/><circle cx="20" cy="17" r="4" fill="#8a9096" stroke="#222"/></svg>
      <svg viewBox="0 0 30 32"><path d="M22 8l6-6M1 30l6-6" stroke="#222" stroke-width="1.300"/><text x="7" y="22" class="t50">50</text></svg>
      <svg viewBox="0 0 30 32"><path d="M10 2h13l6 6v22H10z" fill="#fff" stroke="#8a1010" stroke-width="1.300"/><path d="M13 25c5-2 6-8 5-11s-2-1 0 3 5 7 9 5-4-2-10 0z" fill="none" stroke="#d01818" stroke-width="1.500"/><rect x="0" y="1" width="21" height="10" fill="#b01010"/><text x="3.500" y="8.500" class="tP">PDF</text></svg>
      <svg viewBox="0 0 30 32"><path d="M2 0h20l6 6v26H2z" fill="#2a5a9c"/><path d="M2 13q13 0 26 12v7H2z" fill="#f8d020"/><path d="M15 5l13 5v10q-6-5-13-8z" fill="#8ab4e0"/><path d="M3 7h13M8.500 1v12M6 4.500h5v5H6z" fill="none" stroke="#e8f0f8"/><text x="3" y="30" class="tD">DWG</text></svg>
    </div>
  </div>
  <div class="status">
    <span class="coord">1595.64,-1354.20,-941.45</span>
    <div class="toggles">
      <span class="lit"><svg viewBox="0 0 22 22"><path d="M4 5h10M4 9h10M4 13h10" stroke="#333" stroke-dasharray="1.500 1.500"/><path d="M17 4v14M4 17h12" stroke="#111" stroke-width="1.500" stroke-dasharray="2 1.500"/></svg></span>
      <span><svg viewBox="0 0 22 22"><path d="M3 3h16v16H3zM6 3v16M9 3v16M12.500 3v16M16 3v16M3 6h16M3 9.500h16M3 12.500h16M3 16h16" fill="none" stroke="#222"/></svg></span>
      <span><svg viewBox="0 0 22 22"><path d="M3 2v17h16M3 12h6v7" fill="none" stroke="#888c8e"/></svg></span>
      <span class="lit"><svg viewBox="0 0 22 22"><path d="M14 14a5 5 0 1 1-1-7M10 12l7-7M9 12h8" fill="none" stroke="#333" stroke-width="1.500"/></svg></span>
      <span class="lit"><svg viewBox="0 0 22 22"><rect x="5" y="5" width="14" height="13" fill="#f4f7f6" stroke="#666a6c"/><circle cx="4.500" cy="4" r="1.500" fill="none" stroke="#e05a18"/></svg></span>
      <span><svg viewBox="0 0 22 22"><path d="M15 5L5 16h12" fill="none" stroke="#333" stroke-width="1.300"/></svg></span>
      <span><svg viewBox="0 0 22 22"><path d="M4 4v13h14M4 17l6-6" fill="none" stroke="#444" stroke-width="1.300"/><path d="M13 3v8M9 7h8" stroke="#2a3cc8" stroke-width="1.300"/></svg></span>
    </div>
    <div class="tog cal"><svg viewBox="0 0 22 22"><path d="M7 5h7v11H7z" fill="#fff" stroke="#222" stroke-width="1.300"/><path d="M9 8h4M9 10.500h4M9 13h4" stroke="#222" stroke-dasharray="1 .5"/></svg></div>
    <div class="slide"><i></i></div>
    <div class="tog"><svg viewBox="0 0 22 22"><circle cx="10.500" cy="11" r="7" fill="#eef0ef" stroke="#555a5e" stroke-width="2" stroke-dasharray="2.500 1.500"/><circle cx="10.500" cy="11" r="2.500" fill="none" stroke="#555"/></svg></div>
  </div>
</section>

<!-- node editor -->
<section class="win flow">
  <div class="edge"></div>
  <aside class="pal">
    <div>常用</div>
    <div><svg viewBox="0 0 26 26"><rect x="5" y="1" width="19" height="21" fill="#fff" stroke="#3a88d8" stroke-width="1.500"/><path d="M5 3.500h19" stroke="#3a88d8" stroke-width="2"/><path d="M7 8h9M7 11h9M7 14h6" stroke="#c4c8ca"/><path d="M18 6h5v14h-5z" fill="#7fb8e8"/><path d="M3 17v8h11v-8z" fill="#f0c070" stroke="#8a6430"/><path d="M1 18l7-6 7 6" fill="#e8b060" stroke="#8a6430" stroke-width="1.500"/><path d="M7 19h3v6H7z" fill="#b07828"/></svg>结构模型</div>
    <div><svg viewBox="0 0 26 26"><path d="M6 0v24M13 0v24M20 0v24M1 5h24M1 12h24M1 19h24" stroke="#5c6064" stroke-width="1.500"/><path d="M1 8h23M1 15h23M1 22h23M9 4v20M16 4v20M23 6v17" stroke="#8ab0dc" stroke-width="1.200"/></svg>结构模型数据</div>
    <div><svg viewBox="0 0 26 26"><rect x="1" y="1" width="23" height="23" fill="#fcfcfc" stroke="#b4b0ac" stroke-width="1.500"/><path d="M3 6h19M3 11h19M3 16h19M8 3v19M14 3v19M19 3v19" stroke="#e4e4e2"/><path d="M3 14l6-8 8 8 5-5" fill="none" stroke="#d84848" stroke-width="1.300"/><path d="M5 19l6-6 6-6 5 6" fill="none" stroke="#3c9a3c" stroke-width="1.300"/><path d="M8 5h2v2H8zM16 13h2v2h-2z" fill="#fff" stroke="#d84848"/><path d="M16 6h2v2h-2zM4 18h2v2H4z" fill="#fff" stroke="#3c9a3c"/></svg>后处理</div>
    <div><svg viewBox="0 0 26 26"><circle cx="13" cy="13" r="12.500" fill="#17509c"/><path d="M3 7c8-6 16-3 20 3" fill="none" stroke="#5a9ad8"/><text x="2.500" y="17" class="tY">YJK</text></svg>YJK模型</div>
    <div><svg viewBox="0 0 26 26"><path d="M5.500 2H21v5h-2l-1-2h-7l6 8-7 8h8l1-3h2v6H5v-3l7-8-7-9z" fill="#b8b6b4" stroke="#8a8886"/></svg>优化算法</div>
    <div><svg viewBox="0 0 26 26"><path d="M2 9c1-5 3-6 6-6h17v4h-5v12c0 2 2 2 4 1-1 5-8 5-8-1V7h-4c0 7-1 17-6 17-3 0-3-3-1-5 3-2 3-7 3-12-3 0-4 0-6 2z" fill="#7ec0f0" stroke="#4a88c0"/></svg>数学</div>
  </aside>
  <div class="board">
    <u class="dot a"></u><u class="dot b"></u><u class="dot c"></u>
    <div class="knode"><strong>接收GH节点</strong><span>节点</span><i></i></div>
  </div>
</section>

<!-- Grasshopper -->
<section class="win gh">
  <header class="gtitle"><span>Grasshopper - unnamed</span><svg viewBox="0 0 130 14"><path d="M1 6.500h12M60.500 1.500h8q2 0 2 2v7q0 2-2 2h-7q-2 0-2-2v-7q0-2 2-2M118 1l11 12M129 1l-11 12" fill="none" stroke="#7c8081" stroke-width="1.100"/></svg></header>
  <nav class="gmenu"><span>File</span><span>Edit</span><span>View</span><span>Display</span><span>Solution</span><span>Help</span><span>unnamed</span></nav>
  <nav class="gtabs"><span class="on">Params</span><span>Maths</span><span>Sets</span><span>Vector</span><span>Curve</span><span>Surface</span><span>Mesh</span><span>Intersect</span><span>Transform</span><span>Display</span><span>Kangaroo2</span><span>Gama</span></nav>
  <div class="gribbon">
    <div class="gp"><div class="gi">
      <div><svg viewBox="0 0 31 29"><use href="#hex"/><path d="M11 10l9 9M20 10l-9 9" stroke="#f4f6f5" stroke-width="3.500"/></svg><svg viewBox="0 0 31 29"><use href="#hex"/><path d="M9 21l9-9" stroke="#f4f6f5" stroke-width="4.500"/><path d="M13 8h10v10z" fill="#f4f6f5"/></svg></div><i></i>
      <div><svg viewBox="0 0 31 29"><use href="#hex"/><ellipse cx="15.500" cy="14" rx="8" ry="6" fill="none" stroke="#f4f6f5" stroke-width="2.200"/></svg><svg viewBox="0 0 31 29"><use href="#hex"/><path d="M7 8c7 1 12 6 11 14M16 22h6M7 8l-1 3" fill="none" stroke="#f4f6f5" stroke-width="2.300"/></svg></div>
      <div><svg viewBox="0 0 31 29"><use href="#hex"/><ellipse cx="15.500" cy="14" rx="10" ry="6" transform="rotate(-35 15.500 14)" fill="none" stroke="#c4c8c8" stroke-width="2"/><ellipse cx="15.500" cy="14" rx="6" ry="3" transform="rotate(-35 15.500 14)" fill="none" stroke="#f4f6f5" stroke-width="1.500"/></svg><svg viewBox="0 0 31 29"><use href="#hex"/><path d="M11 19l9-9" stroke="#f4f6f5" stroke-width="2"/><circle cx="10.500" cy="19" r="2.300" fill="none" stroke="#f4f6f5" stroke-width="1.500"/><circle cx="20" cy="9.500" r="2.300" fill="none" stroke="#f4f6f5" stroke-width="1.500"/></svg></div>
      <div><svg viewBox="0 0 31 29"><use href="#hex"/><path d="M7 19l3-11 11-2 4 9-9 1z" fill="#b4b6b6" stroke="#f4f6f5" stroke-width="2"/></svg><svg viewBox="0 0 31 29"><use href="#hex"/><path d="M15.500 8l6.500 6.500-6.500 6.500L9 14.500z" fill="none" stroke="#e4e8e8" stroke-width="2.500"/><path d="M9 8l3 3M22 8l-3 3M9 21l3-3M22 21l-3-3" stroke="#c4c8c8" stroke-width="1.500"/></svg></div><i></i>
      <div><svg viewBox="0 0 31 29"><use href="#hex"/><path d="M8 10l7-4 8 3v10l-8 4-7-4z" fill="#c8cac9" stroke="#f4f6f5"/><path d="M8 10l8 3 7-4M16 13v10" fill="none" stroke="#777"/></svg><svg viewBox="0 0 31 29"><use href="#hex"/><path d="M7 14L15 6l8 3 2 6-9 9-8-3z" fill="#c8cac9"/><ellipse cx="18" cy="12" rx="7" ry="4.500" transform="rotate(45 18 12)" fill="#a4a6a6" stroke="#f4f6f5"/></svg></div>
      <div><svg viewBox="0 0 31 29"><use href="#hex"/><path d="M9 8h13v13H9zM15.500 5v19M6 14.500h19M9 8l13 13M22 8L9 21M12 5v4M19 5v4M12 20v4M19 20v4" fill="none" stroke="#b4b8b8" stroke-width="1.200"/></svg><svg viewBox="0 0 31 29"><use href="#hex"/><path d="M11 7l11-2v18l-5 1v-6H7z" fill="#b8baba" stroke="#f4f6f5"/><path d="M15 6v12M10 12h12" stroke="#777"/></svg></div></div><b class="ex">Geometry</b></div>
    <div class="gp"><div class="gi">
      <div><svg viewBox="0 0 31 29"><use href="#hex"/><circle cx="15.500" cy="14.500" r="8" fill="#f4f6f5"/><path d="M21 9a7 7 0 0 1-10 10z" fill="#262b32"/></svg><svg viewBox="0 0 31 29"><use href="#hex"/><text x="15.500" y="22" class="h7">7</text></svg></div>
      <div><svg viewBox="0 0 31 29"><use href="#hex"/><text x="15.500" y="21" class="h01">0.1</text></svg><svg viewBox="0 0 31 29"><use href="#hex"/><text x="15.500" y="22" class="hA">A</text></svg></div></div><b class="pr">Primitive</b></div>
    <div class="gp"><div class="gi">
      <div><svg viewBox="0 0 31 31"><use href="#tile"/><path d="M13 8h5v7h4l-6.500 7L9 15h4z" fill="#15181b"/><path d="M5 24h21" stroke="#15181b" stroke-width="3" stroke-dasharray="1.500 1.500"/></svg><svg viewBox="0 0 31 31"><rect x="1" y="1" width="29" height="29" rx="2" fill="#fbd41c" stroke="#1c1e20" stroke-width="1.500"/><path d="M5 20l2 5 2-8 2 7 4-13 0 11 5-10 0 9 6-11-2 12" fill="none" stroke="#c06c10" stroke-width="2.600" stroke-linejoin="round"/></svg></div><i></i>
      <div><svg viewBox="0 0 31 31"><use href="#tile"/><path d="M10 5h11v20H10z" fill="#22262a" stroke="#111"/><path d="M12 7h7v7h-7z" fill="#d4d6d6"/></svg><svg viewBox="0 0 31 31"><circle cx="15.500" cy="15.500" r="14" fill="#9a9c9c" stroke="#55595b" stroke-width="1.500"/><circle cx="15" cy="15.500" r="10" fill="#262b32"/><path d="M23 10l7 5.500-7 5.500z" fill="#262b32"/></svg></div>
      <div><svg viewBox="0 0 31 31"><use href="#tile"/><path d="M8 7h14M15 4v6M11 14h9l-5 5c5 0 5 6 0 8" fill="none" stroke="#4d5154" stroke-width="2.500"/></svg><svg viewBox="0 0 31 31"><use href="#tile"/><path d="M4 6h23v5H4zM4 13h23v5H4zM4 20h23v5H4z" fill="#d4d6d6" stroke="#22262a" stroke-width="1.500"/></svg></div><i></i>
      <div><svg viewBox="0 0 31 31"><rect x="1" y="1" width="29" height="29" rx="2" fill="#f24a9c" stroke="#1c1e20" stroke-width="1.500"/><path d="M2 20h27v9H2z" fill="#f01c8c"/><path d="M15 2h8v8h-8z" fill="#d81470"/><path d="M2 20h27" stroke="#222"/><circle cx="3" cy="20" r="1.800" fill="#fff" stroke="#222"/><circle cx="21" cy="20" r="2" fill="#fff" stroke="#222"/></svg><svg viewBox="0 0 31 31"><rect x="1" y="1" width="29" height="29" rx="2" fill="#5cc828" stroke="#1c1e20" stroke-width="1.500"/><path d="M2 8h7v7H2zM16 15h7v8h-7z" fill="#2a8a14"/><path d="M9 15h7v8H9z" fill="#1c5a10"/><path d="M9 2h7v6H9zM16 8h7v7h-7z" fill="#a8ea58"/><path d="M23 22h6v7h-6z" fill="#5ad8d0"/></svg></div></div><b class="ex">Input</b></div>
    <div class="gp"><div class="gi">
      <div><svg viewBox="0 0 31 31"><path d="M8 20q5-4 7-15M22 22q0-10-6-17" fill="none" stroke="#5a2a14" stroke-width="1.500"/><path d="M6 9q5-9 14-6-3 8-14 6z" fill="#3cae2c" stroke="#1c6a14"/><circle cx="8.500" cy="21" r="6" fill="#d81414"/><circle cx="22" cy="24" r="6" fill="#d81414"/><circle cx="7" cy="19" r="1.700" fill="#ffb0a0"/><circle cx="20.500" cy="22" r="1.700" fill="#ffb0a0"/></svg><svg viewBox="0 0 31 31"><use href="#tile"/><path d="M14 27q3-6 1-12M15.500 17q5-5 10-6M15 17Q9 14 6 12M15 15V6" fill="none" stroke="#15181b" stroke-width="2.500"/><path d="M4 11q1-5 5-4 2-4 6-3 5-2 7 2 5 0 5 5-3 4-6 2-4 3-7-1-4 3-10-1z" fill="#22262a" fill-opacity=".75"/><path d="M2 27h27v3H2z" fill="#15181b"/></svg></div><i></i>
      <div><svg viewBox="0 0 31 31"><path d="M3 12h12V6l13 9.500L15 26v-6H3z" fill="#3a3f44" stroke="#15181b" stroke-width="1.300"/></svg><svg viewBox="0 0 31 31"><path d="M3 12h12V6l13 9.500L15 25v-6H3z" fill="#f4f7f6" stroke="#777b7d" stroke-width="2"/></svg></div><i></i>
      <div><svg viewBox="0 0 31 31"><ellipse cx="14" cy="12" rx="11" ry="9" transform="rotate(-45 14 12)" fill="url(#gGrey)" stroke="#555a5e"/><circle cx="11" cy="14" r="3.500" fill="#22262a"/><ellipse cx="21" cy="20" rx="9.500" ry="7" transform="rotate(-45 21 20)" fill="url(#gPink)" stroke="#8a1048"/><circle cx="20" cy="21" r="2.500" fill="#5a0830"/></svg><svg viewBox="0 0 31 31"><path d="M12 3h6v9l7 14q0 3-10 3T5 26l7-14z" fill="#f4eef0" stroke="#777b7d" stroke-width="1.300"/><path d="M9 18h12l4 8q0 3-10 3T5 26z" fill="#d8347c"/></svg></div></div><b class="ex">Util</b></div>
  </div>
  <div class="gbar">
    <svg class="open" viewBox="0 0 26 28"><path d="M3 2h14l2 3v14H3z" fill="#f4f6f5" stroke="#9a9d9e"/><path d="M1 12h10l3-4h10v18H2z" fill="#5cc828" stroke="#2a6a14"/><path d="M3 18h20v6H3z" fill="#8ae648"/></svg>
    <svg class="save" viewBox="0 0 28 28"><path d="M1 1h26v26H4l-3-3z" fill="#1f6ae0" stroke="#12306c" stroke-width="1.500"/><path d="M5 2h18v11H5z" fill="#d4dade"/><path d="M7 18h15v9H7z" fill="#b8bcc0" stroke="#12306c"/><path d="M10 20h5v6h-5z" fill="#12306c"/></svg>
    <div class="zoom">125%<svg viewBox="0 0 10 6"><path d="M.5.5L5 5 9.500.5" fill="none" stroke="#444"/></svg></div>
    <svg class="frame" viewBox="0 0 28 28"><path d="M2 11V2h9M17 2h9v9M26 17v9h-9M11 26H2v-9" fill="none" stroke="#15181b" stroke-width="4"/><path d="M3 11V3h8M17 3h8v8" fill="none" stroke="#8d9091"/><path d="M11 11l6 6M17 11l-6 6" stroke="#22262a" stroke-width="2.500"/></svg>
    <em></em>
    <svg class="eye" viewBox="0 0 28 20"><path d="M1 10Q14-7 27 10 14 27 1 10z" fill="#fff" stroke="#22262a" stroke-width="1.600"/><circle cx="14" cy="10" r="7" fill="#5cb4e8" stroke="#1c4a78"/><circle cx="14" cy="10" r="3" fill="#10181f"/><circle cx="12" cy="7.500" r="1.500" fill="#fff"/></svg>
    <em></em>
    <svg class="pen" viewBox="0 0 28 28"><path d="M1 7c6 1 2 8 1 12s5 7 10 6" fill="none" stroke="#4a1010" stroke-width="1.800"/><path d="M12 17L23 2l4 6v6L17 24z" fill="#e82c2c"/><path d="M12 17l5 7-6 2z" fill="#f0b030" stroke="#5a2808"/><path d="M16 12l7-9 2 3-7 10z" fill="#ff8080"/></svg>
    <span class="grow"></span>
    <svg class="m" viewBox="0 0 28 28"><path d="M5 12l4-9 5-2 9 3 1 5-3 8H7z" fill="url(#gSphere)" stroke="#8d9091"/><ellipse cx="18.500" cy="6.500" rx="5.500" ry="3.500" transform="rotate(25 18.500 6.500)" fill="#e8e8e6" stroke="#8d9091"/><path d="M3 20v3q5 5 11 5t11-5v-3z" fill="#c4c6c5"/><ellipse cx="14" cy="19.500" rx="11" ry="5" fill="#22262a"/></svg>
    <svg class="m" viewBox="0 0 28 28"><path d="M2 15L13 2q3-2 6-1l7 5q2 3 0 7L15 25q-3 3-7 1l-5-4q-2-3-1-7z" fill="#f4f7f6" stroke="#55595b" stroke-width="1.200"/><ellipse cx="19" cy="9" rx="6.500" ry="4.500" transform="rotate(50 19 9)" fill="none" stroke="#55595b"/><ellipse cx="9" cy="19" rx="6.500" ry="4.500" transform="rotate(50 9 19)" fill="none" stroke="#55595b"/></svg>
    <span class="sel"><svg viewBox="0 0 28 28"><path d="M2 14L12 3q3-3 7-1l7 6q2 3 0 6L15 26q-3 2-7 0l-6-5q-2-3 0-7z" fill="#d01818" stroke="#5a0808"/><ellipse cx="20" cy="8.500" rx="6.500" ry="4.500" transform="rotate(45 20 8.500)" fill="#a00c0c" stroke="#5a0808"/><path d="M4 16l9-10 3 2-9 11z" fill="#f06a6a"/></svg></span>
    <i class="s1"></i>
    <svg class="m" viewBox="0 0 28 28"><path d="M2 2c8 7-1 16 9 24h11" fill="none" stroke="#22262a" stroke-width="1.500"/><path d="M9 6q6-6 11-4l5 5q3 4 0 8L16 25q-4 1-7-2 3-8 0-17z" fill="#14948c" stroke="#0a4a48"/><ellipse cx="19.500" cy="8" rx="7" ry="4.500" transform="rotate(40 19.500 8)" fill="#0c6c68" stroke="#0a4a48"/></svg>
    <svg class="m" viewBox="0 0 28 28"><path d="M2 15l7-8 13 14-5 5q-4 2-9 0l-5-4q-2-3-1-7z" fill="#e0e2e1" stroke="#777b7d"/><path d="M8 6q5-6 11-4l6 5q2 4 0 8l-4 4z" fill="#5cae20" stroke="#1c5a10"/><ellipse cx="19.500" cy="8.500" rx="6" ry="4" transform="rotate(40 19.500 8.500)" fill="#2a6a14"/><path d="M1 4l22 21" stroke="#22262a" stroke-width="1.500"/></svg>
    <svg class="m" viewBox="0 0 28 28"><circle cx="14" cy="13" r="12" fill="#e6e8e7" stroke="#666a6c"/><path d="M14 1a12 12 0 0 0 0 24z" fill="#e08c28" stroke="#7a3c08"/><path d="M4 19q4 6 10 6v-6z" fill="#9a4a10"/></svg>
    <i class="s2"></i>
    <svg class="m" viewBox="0 0 28 28"><path d="M14 2l9 4 3 8-4 9-9 3-8-4-3-9 4-8z" fill="#5aa0e8" stroke="#1c2a88" stroke-width="1.800"/><path d="M9 6l7-2 5 6-6 6-8-3z" fill="#a9d8f8"/></svg>
    <em></em>
  </div>
  <div class="canvas">
    <svg class="wires" viewBox="0 0 951 204">
      <path d="M156.500 0v204M344.500 0v204M531.500 0v204M719.500 0v204M906.500 0v204M0 11.500h951M0 74.500h951M0 136.500h951M0 199.500h951" stroke="#abacaa"/>
      <linearGradient id="w" gradientUnits="userSpaceOnUse" x1="341" y1="0" x2="484" y2="0"><stop offset="0" stop-color="#8ae03a"/><stop offset=".4" stop-color="#98e84e"/><stop offset=".44" stop-color="#90b46c"/><stop offset=".7" stop-color="#a0ac8c"/><stop offset="1" stop-color="#a9a8a0"/></linearGradient>
      <path d="M341 101c70 0 70-42 140-42" fill="none" stroke="url(#w)" stroke-width="3.500"/>
      <path d="M575 83.500h112" stroke="#4c5052" stroke-width="4"/>
    </svg>
    <div class="gn list"><span>1000</span><span>2000</span><span>3000</span><span>4000</span></div>
    <svg class="tick" viewBox="0 0 20 16"><path d="M1 7l3-3 5 5 8-8 3 3-10 12-2 0z" fill="#3f5a50" stroke="#1d3420" stroke-width="1"/></svg>
    <svg class="cursor" viewBox="0 0 14 20"><path d="M1 1v16l4-4 3 6 3-1.500-3-5.500h5z" fill="#fff" stroke="#222"/></svg>
    <div class="gn pt"><div class="ins"><span>X</span><span>Y</span><span>Z</span></div><strong>Pt</strong><span>Pt</span></div>
    <div class="gn send"><span>节点</span><strong>发送点</strong></div>
    <svg class="ports" viewBox="0 0 951 204">
      <g fill="#fff" stroke="#15181b" stroke-width="2.200"><path d="M337 96.500a4.500 4.500 0 0 1 0 9"/><path d="M484.500 54a4.500 4.500 0 0 0 0 9M484.500 79a4.500 4.500 0 0 0 0 9M484.500 104a4.500 4.500 0 0 0 0 9M571 79a4.500 4.500 0 0 1 0 9M688 79a4.500 4.500 0 0 0 0 9"/></g>
      <path d="M763 49.500l5 5-5 5 5 5-5 5 5 5-5 5 5 5-5 5 5 5-5 5 5 5-5 5 5 5-3 3.500" fill="none" stroke="#6a6e70" stroke-width="1.200"/>
      <path d="M876 164l6-5 4 3 2-3 5-3v14l-6 1-2-3-3 2z" fill="#15181b"/>
      <circle cx="914" cy="172" r="25" fill="#f2f5f4" stroke="#4c5052" stroke-width="1.300"/><circle cx="914" cy="172" r="20" fill="none" stroke="#adadab" stroke-width="5"/><circle cx="914" cy="172" r="17.500" fill="#d3cfca"/><circle cx="914" cy="172" r="10" fill="#f0f4f3"/>
      <path d="M916 149l7 2-4 6zM938 174l-7 3-1-6zM913 195l-6-2 4-6zM891 169l7-3v6z" fill="#f8fafa"/>
      <path d="M0 178.500h7.500V204" fill="none" stroke="#15181b"/><path d="M0 185h7v19H0z" fill="#8a8c8c"/>
    </svg>
  </div>
</section>
</main>
</body>
</html>
```

FILE: styles.css
```css
:root {
  --paper: #f0f4f3;
  --sand: #d3cfca;
  --mid: #adadab;
  --ui: "Noto Sans", "Noto Sans CJK SC", sans-serif;
}
* { box-sizing: border-box; }
body { margin: 0; background: var(--paper); font-family: var(--ui); color: #111; }
.defs { position: absolute; width: 0; height: 0; }
svg { display: block; flex: none; overflow: visible; }
.desktop { position: relative; width: 1893px; height: 929px; overflow: hidden; background: var(--sand); }
.win { position: absolute; display: flex; flex-direction: column; overflow: hidden; background: var(--paper); }

/* text inside icons */
.t8 { font: bold 8px "DejaVu Sans Condensed", "DejaVu Sans", sans-serif; letter-spacing: -.8px; }
.t12 { font: 12px "DejaVu Sans", sans-serif; }
.tA { font: bold 19px "Liberation Sans", sans-serif; fill: #22262a; }
.tB { font: bold 26px "Liberation Sans", sans-serif; fill: #15181b; }
.t50 { font: 14px "Liberation Sans", sans-serif; fill: #22262a; }
.tP { font: bold 7px "DejaVu Sans", sans-serif; fill: #fff; }
.tD { font: bold 10px "Open Sans", sans-serif; fill: #111; }
.tY { font: italic bold 11px "Liberation Sans", sans-serif; fill: #a8e060; letter-spacing: -.3px; }
.h7, .h01, .hA { font: bold 20px "DejaVu Sans", sans-serif; fill: #f4f6f5; text-anchor: middle; }
.h01 { font: bold 17px "Liberation Serif", serif; }
.hA { font: bold 22px "Liberation Serif", serif; }

/* ---------- Rhino ---------- */
.rhino { left: 0; top: 0; width: 949px; height: 490px; border-left: 1px solid #a4a4a2; font-size: 15.500px; }
.rmenu { display: grid; flex: none; margin-top: -10px; height: 54px; padding-left: 7px; grid-auto-rows: 25px; line-height: 25px; color: #6f7273;
  grid-template-columns: 43px 46px 52px 60px 72px 57px 55px 58px 97px 92px 56px 75px 70px 60px; }
.history { flex: none; height: 37px; margin-left: 7px; line-height: 25px; border-bottom: 1px solid #cfcac6; }
.prompt { flex: none; height: 27px; padding: 0 1px 0 7px; display: flex; justify-content: space-between; line-height: 21px; border-bottom: 1px solid #ccd3e2; }
.prompt small { font-size: 13.300px; }
.spin { display: grid; gap: 1px; padding-top: 1px; align-content: start; }
.spin svg { width: 18px; height: 10px; border: 1px solid #999b9c; }
.rtabs { position: relative; display: grid; flex: none; height: 28px; margin-left: 7px; padding-left: 14px; line-height: 33px; color: #33373a;
  grid-template-columns: 96px 87px 93px 82px 75px 150px 91px 104px 113px 6px 26px; }
.rtabs .cut { overflow: hidden; padding-left: 1px; width: 5px; }
.rtabs .more { display: flex; align-items: center; border-left: 1px solid #cfcac6; padding-left: 2px; height: 23px; margin-top: 4px; line-height: 18px; }
.rtabs .more svg { width: 16px; height: 16px; margin-left: 4px; }
.tabline { position: absolute; left: 0; top: 4px; width: 942px; height: 25px; }
.rtools { display: flex; flex: none; align-items: center; height: 47px; padding: 0 0 15px 4.500px; }
.rtools svg { width: 24px; height: 24px; margin: 0 2.080px; }
.rtools i { width: 1px; height: 24px; margin: 0 2px; background: #b4b2b0; }
.rtools em, .rside em { font-style: normal; font-size: 16px; align-self: center; justify-self: center; }
.rtools em { margin: -6px 0 0 3px; }
.rside em { padding-left: 8px; line-height: 16px; }
.rmain { display: flex; flex: none; height: 251px; }
.rside { width: 62px; padding-top: 9px; margin-left: -1px; margin-right: 1px; display: grid; grid-template-columns: 28px 28px; grid-auto-rows: 28.100px; align-content: start;
  background: linear-gradient(#ccd3e2, #ccd3e2) 2px 3px / 54px 1px no-repeat; }
.rside svg { width: 28px; height: 28px; }
.views { display: grid; grid-template-columns: 441px 440px; grid-template-rows: 124px 123px; gap: 4px 4px; }
.view { position: relative; background: #9ca3ab; border: 1px solid #cdc9c5; }
.vart { position: absolute; left: 0; top: 0; width: 440px; }
.vtag { display: inline-flex; align-items: center; height: 22px; padding: 0 8px 3px 8px; background: var(--sand); color: #6a6c6c; font-weight: 700; font-size: 14.800px; border-radius: 0 0 3px 0; vertical-align: top; }
.vtag.act { background: #869cf0; color: #1f2a38; padding-left: 7px; }
.vtag.act s { margin-left: 11px; }
.vtag s { position: relative; top: 1px; width: 14px; height: 19px; margin-left: 8px; margin-right: -6px; border-left: 1px solid #55595b; text-decoration: none; }
.vtag s::after { content: ""; position: absolute; left: 1px; top: 7px; border: 5px solid transparent; border-top-color: currentColor; border-bottom: 0; }
.mesh { position: absolute; left: 130px; top: 24px; width: 68px; height: 67px; border: 1px solid #8a8c8c;
  background: repeating-linear-gradient(90deg, #8c9092 0 1px, transparent 1px 3px), repeating-linear-gradient(#8c9092 0 1px, #969ca2 1px 3px); }
.vtabs { position: relative; display: grid; flex: none; align-items: center; height: 39px; padding: 0 0 7px 77px; color: #33373a; grid-template-columns: 107px 50px 61px 66px 12px; }
.vtabs svg { width: 12px; height: 12px; }
.vtabs .vline { position: absolute; left: 155px; top: 3px; width: 64px; height: 27px; }
.osnap { display: grid; flex: none; height: 17px; padding-left: 9px; background: linear-gradient(#f0f4f3 2px, #d3dde4 8px); color: #22262a; line-height: 17px;
  grid-template-columns: 55px 63px 66px 57px 56px 47px 62px 54px 67px 63px 77px 91px 80px; }
.osnap span { display: flex; gap: 5px; }
.osnap span::before { content: ""; width: 16px; height: 16px; border: 1px solid #4c5052; border-radius: 3px; background: var(--paper); }
.osnap .dim::before { border-color: #c4c6c6; }

/* ---------- CAD ---------- */
.cad { left: 950px; top: 0; width: 943px; height: 523px; border-left: 1px solid #b4b4b2; }
.ribbon { display: flex; flex: none; height: 93px; border-bottom: 2px solid #777b7d; font-size: 12px; }
.rp { display: flex; flex-direction: column; border-right: 1px solid #cdc9c5; margin-right: 2px; }
.p1 { width: 51px; } .p2 { width: 241px; } .p3 { width: 306px; } .p4 { width: 79px; margin-right: 0; }
.p2 > b { padding-right: 2px; }
.cells { display: flex; flex: none; height: 74px; border-bottom: 1px solid #cdc9c5; }
.p2 .cells, .p4 .cells { padding-left: 1px; }
.cell { display: flex; flex-direction: column; align-items: center; width: 38px; height: 70px; color: #3c4246; line-height: 16px; }
.p1 .cell { width: 50px; }
.cell.w { width: 46px; }
.cell svg { width: 32px; height: 32px; margin-bottom: 5px; }
.cell.d::after { content: ""; margin-top: 10px; border: 5px solid transparent; border-top-color: #1f6ae0; border-bottom: 0; }
.rp > b { flex: none; height: 17px; font-weight: 400; text-align: center; line-height: 19px; color: #111; }
.void { width: 93px; border-right: 2px solid var(--paper); margin-left: 1px; background: linear-gradient(var(--paper) 9px, var(--sand) 9px 53px, var(--mid) 53px); }
.floors { flex: 1; padding: 8px 3px 0 4px; background: linear-gradient(var(--paper) 9px, var(--sand) 9px 53px, var(--mid) 53px); }
.ficons { display: flex; gap: 6px; padding-left: 3px; }
.ficons svg { width: 32px; height: 26px; }
.fsel { display: flex; align-items: center; justify-content: space-between; height: 22px; margin-top: 15px; padding: 0 3px 0 2px; border: 1px solid #b6bccb; background: var(--paper); color: #6b6f72; font-size: 12.200px; white-space: nowrap; }
.fsel svg { width: 8px; height: 5px; fill: #111; }
.stage { flex: none; height: 317px; background: #222a33; }
.stage svg { width: 943px; height: 317px; margin-left: -1px; }
.dockbar { flex: none; height: 10px; background: #696b6b; border-top: 1px solid var(--paper); }
.dock { display: flex; flex: none; height: 73px; border-bottom: 2px solid #15181b; }
.grip { position: relative; flex: none; }
.grip::before { content: ""; position: absolute; left: 0; right: 3px; top: 3px; height: 3px; background: repeating-linear-gradient(90deg, #222 0 1px, transparent 1px 2px); }
.g1 { width: 13px; background: #8a8c8d; }
.g2 { width: 15px; background: var(--mid); }
.cmd { flex: none; width: 366px; padding-left: 3px; font-size: 12.900px; line-height: 17px; background: var(--paper); }
.cmd p { margin: 0; }
.cmd p:first-child { margin-top: 1px; }
.cmd > div { display: flex; height: 19px; border-top: 1px solid #a9a89a; line-height: 19px; }
.cmd i { width: 21px; height: 3px; margin: 8px 23px 0 auto; background: #8d9091; }
.tools { display: grid; grid-template-columns: repeat(14, 38px); grid-template-rows: 35px 35px; padding: 1px 0 0 2px; align-items: center; justify-items: center; }
.tools svg { width: 30px; height: 32px; }
.status { display: flex; flex: none; height: 29px; padding-right: 6px; background: linear-gradient(var(--paper) 6px, var(--sand) 6px 24px, var(--paper) 24px 25px, var(--mid) 25px 28px, #6a6c6c 28px); }
.coord { width: 216px; padding-left: 8px; font-size: 13.300px; line-height: 24px; color: #22262a; }
.toggles { display: flex; height: 24px; }
.toggles span, .tog { width: 22px; height: 24px; padding-top: 1px; border-left: 1px solid #3c4042; border-top: 1px solid #9a9c9c; background: linear-gradient(var(--paper) 5px, var(--sand) 5px); }
.toggles span:last-child { border-right: 1px solid #3c4042; width: 23px; }
.toggles .lit { background: linear-gradient(#c8e6ec, #8cc8d8 70%, #a9cdf0 70%); }
.toggles svg, .tog svg { width: 20px; height: 21px; }
.tog { width: 23px; border-right: 1px solid #3c4042; }
.cal { margin-left: auto; }
.slide { position: relative; width: 120px; height: 14px; margin: 5px 4px 0 19px; border: 1px solid #3c4042; background: var(--sand); }
.slide i { position: absolute; left: -1px; top: -3px; width: 8px; height: 18px; background: var(--mid); border: 1px solid #3c4042; }

/* ---------- node editor ---------- */
.flow { left: 954px; top: 522px; width: 939px; height: 407px; flex-direction: row; border-left: 1px solid var(--mid); }
.edge { width: 10px; background: linear-gradient(92deg, var(--sand) 7px, var(--paper) 8px); }
.pal { width: 131px; margin-right: 8px; padding-left: 16px; border-right: 1px solid #b0b2b2; font-size: 15px; }
.pal div { width: 115px; height: 68.700px; display: flex; flex-direction: column; align-items: center; line-height: 22px; white-space: nowrap; }
.pal div:first-child { height: 32px; line-height: 0; }
.pal svg { width: 26px; height: 26px; margin-bottom: -1px; }
.board { position: relative; flex: 1; border-left: 1.500px solid #6a6c6e; }
.dot { position: absolute; top: 270px; width: 1px; height: 1px; background: #d8d4d2; }
.dot.a { left: 28px; } .dot.b { left: 153px; } .dot.c { left: 403px; }
.knode { position: absolute; left: 175px; top: 191px; width: 89px; height: 138px; border: 2px solid #92c6b0; box-shadow: 1.500px 1.500px 0 #7d8694; display: flex;
  background: linear-gradient(152deg, #f0f4f3 38%, #d8ebe9 38% 62%, #c8ebda 62% 82%, #b9e6d0 82%); }
.knode strong { writing-mode: vertical-rl; width: 34px; margin-left: 2px; padding-top: 7px; line-height: 36px; font-size: 20px; letter-spacing: 1.700px; white-space: nowrap;
  background: linear-gradient(154deg, #f0f4f3 9%, #d8ebe9 9% 26%, #d6dae5 26% 36%, #a9d0ee 36% 80%, #92b2ee 80%); }
.knode span { flex: 1; font-size: 16px; line-height: 22px; margin: 55px 3px 0 0; text-align: right; }
.knode i { position: absolute; right: -5px; top: 62px; width: 5px; height: 12px; background: #92c6b0; border-radius: 0 6px 6px 0; box-shadow: 1px 1px 0 #7d8694; }

/* ---------- Grasshopper ---------- */
.gh { left: 0; top: 480px; width: 955px; height: 449px; border: 1px solid #a4a4a2; border-bottom: 0; border-radius: 0 9px 0 0; font-size: 15.250px; }
.gtitle { display: flex; flex: none; justify-content: space-between; height: 38px; padding: 7px 24px 0 6px; line-height: 25px; color: #8b8f90; }
.gtitle svg { width: 130px; height: 14px; margin-top: 5px; }
.gmenu { display: grid; flex: none; height: 33px; padding-left: 12px; line-height: 35px; grid-template-columns: 46px 49px 57px 72px 83px 555px auto; }
.gtabs { display: grid; flex: none; height: 29px; font: 13.300px "Liberation Mono", monospace; line-height: 34px; color: #6c7072;
  border-bottom: 1px solid #8d9091; grid-template-columns: 74px 59px 51px 66px 60px 75px 51px 90px 90px 74px 90px 60px; }
.gtabs .on { width: 65px; height: 29px; padding-left: 7px; line-height: 28px; color: #111; background: var(--paper); border: 1px solid #9a9c9c; border-left: 0; border-bottom: 0; border-radius: 0 8px 0 0; }
.gribbon { display: flex; flex: none; gap: 4.300px; height: 106px; padding: 2px 0 0 1px; background: linear-gradient(var(--sand) 30px, var(--paper) 30px); }
.gp { height: 91px; border: 1px solid #6c7072; border-radius: 5px; background: linear-gradient(var(--sand) 27px, var(--paper) 27px); overflow: hidden; box-shadow: inset 1px 1px 0 #fff; }
.gi { display: flex; height: 73px; align-items: center; padding: 0 1px; }
.gi div { display: grid; gap: 5px; width: 35.100px; justify-items: center; }
.gi svg { width: 31px; height: 30px; }
.gi i { width: 1px; height: 52px; margin: 0 5.500px; background: #b4b2b0; }
.gp b { position: relative; display: block; height: 18px; border-bottom: 5px solid #0e1012; background: #232a33; color: #fff; font: 12px "Liberation Mono", monospace; letter-spacing: -1.100px; text-align: center; line-height: 14px; padding-right: 12px; }
.gp b.pr { padding-right: 0; }
.gp b.ex::after { content: "✦"; position: absolute; right: 2px; top: 2px; font: 10px "DejaVu Sans", sans-serif; letter-spacing: 0; color: #b4b6b6; }
.gbar { display: flex; flex: none; align-items: center; height: 38px; padding: 1px 1px 0 3px; border-top: 1.500px solid #6c7072; }
.gbar .open { width: 26px; height: 28px; }
.gbar .save { width: 28px; height: 28px; margin-left: 9px; }
.zoom { display: flex; align-items: center; justify-content: space-between; width: 180px; height: 28px; margin: 0 6px 0 12px; padding: 0 5px 0 3px; border: 1px solid #777b7d; box-shadow: -5px 0 0 0 var(--paper), -6px 0 0 0 #b4b2b0; }
.zoom svg { width: 10px; height: 6px; }
.gbar .frame { width: 30px; height: 28px; }
.gbar em { width: 0; border: 3px solid transparent; border-top-color: #111; border-bottom: 0; margin: 0 8px; }
.gbar .eye { width: 28px; height: 20px; }
.gbar .pen { width: 28px; height: 28px; }
.gbar .grow { flex: 1; }
.gbar .m { width: 28px; height: 28px; margin: 0 2.800px; }
.gbar .sel { width: 34px; height: 34px; margin: 0 2px; padding: 2px; border: 1px solid #1c7ad0; }
.gbar .sel svg { width: 28px; height: 28px; }
.gbar i { width: 1px; height: 27px; background: #a4a4a2; }
.gbar .s1 { margin: 0 7px 0 6.500px; }
.gbar .s2 { margin: 0 2.500px 0 3px; }
.gbar em:last-child { margin: 0 2px; }
.canvas { position: relative; flex: none; width: 951px; height: 204px; margin-top: 1px; background: var(--sand); }
.wires, .ports { position: absolute; left: 0; top: 0; width: 951px; height: 204px; }
.gn { position: absolute; border: 1px solid #3c4042; border-radius: 4px; font-size: 14px; box-shadow: 0 1px 0 rgba(80, 80, 80, .4); }
.list { left: 249px; top: 45px; width: 88px; height: 111px; border-color: #2a6a14; display: grid; grid-template-rows: repeat(4, 27.400px); line-height: 26px; text-align: right; padding-right: 15px; color: #18300c; font-size: 13.500px;
  background: linear-gradient(#f0fbe6 2px, #cdf5a4 3px 9px, #98e84c 10px 60px, #88dc36 61px); }
.tick { position: absolute; left: 253px; top: 51px; width: 20px; height: 16px; }
.cursor { position: absolute; left: 261px; top: 87px; width: 14px; height: 20px; }
.pt { left: 484px; top: 43px; width: 88px; height: 81px; display: flex; align-items: center; background: linear-gradient(var(--paper) 17px, var(--sand) 18px); box-shadow: inset 0 0 0 1px #eef1f0; }
.pt .ins { display: grid; grid-template-rows: repeat(3, 25px); width: 23px; padding-left: 8px; line-height: 24px; }
.gn strong { display: flex; align-items: center; justify-content: center; writing-mode: vertical-rl; text-orientation: sideways; transform: rotate(180deg); width: 32px; height: 77px; border: 1px solid #15181b; border-radius: 4px; color: #fff; font-size: 17px; white-space: nowrap; background: linear-gradient(#22262e 42%, #3c4044 43% 90%, #a4a6a6 91%); }
.pt > span { padding-left: 4px; }
.send { left: 688px; top: 49px; width: 76px; height: 70px; display: flex; align-items: center; border-right: 0; border-radius: 4px 0 0 4px; background: linear-gradient(var(--paper) 15px, var(--sand) 16px); font-size: 13px; }
.send span { width: 42px; padding-left: 8px; line-height: 20px; }
.send strong { height: 66px; font-size: 17px; width: 31px; line-height: 20px; }
```
